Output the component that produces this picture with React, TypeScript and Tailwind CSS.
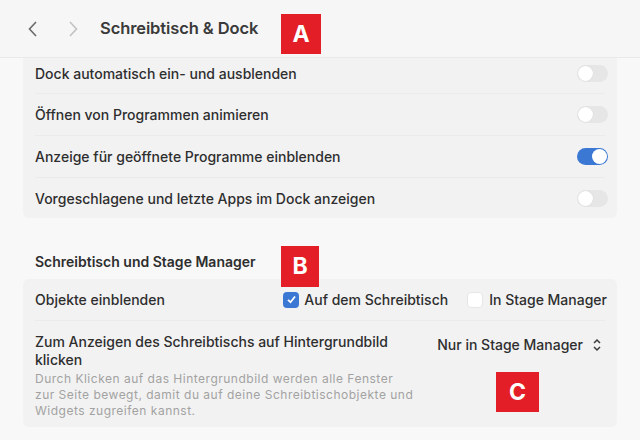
import React from "react";

function Toggle({ on }: { on?: boolean }) {
  return on ? (
    <div className="w-[31px] h-[17px] rounded-full bg-[#3a78d4] relative">
      <div className="absolute right-[1px] top-[1px] w-[15px] h-[15px] rounded-full bg-white" />
    </div>
  ) : (
    <div className="w-[31px] h-[17px] rounded-full bg-[#e6e6e6] relative">
      <div className="absolute left-[1px] top-[1px] w-[15px] h-[15px] rounded-full bg-white shadow-[0_0_1px_rgba(0,0,0,0.15)]" />
    </div>
  );
}

function Row({ label, on, h }: { label: string; on?: boolean; h: string }) {
  return (
    <div className={`flex items-center justify-between pl-3 pr-[9px] ${h}`}>
      <span>{label}</span>
      <Toggle on={on} />
    </div>
  );
}

export default function App() {
  return (
    <div
      className="w-[640px] h-[440px] bg-[#f8f8f8] text-[#2e2e2e] relative overflow-hidden"
      style={{ fontFamily: "Inter, 'Liberation Sans', sans-serif" }}
    >
      <div className="h-[58px] flex items-center bg-[#f6f6f6] border-b border-[#e9e9e9] relative z-10">
        <svg width="12" height="16" viewBox="0 0 12 16" className="ml-[27px]">
          <path d="M9 1 L2.5 8 L9 15" fill="none" stroke="#6a6a6a" strokeWidth="1.6" />
        </svg>
        <svg width="12" height="16" viewBox="0 0 12 16" className="ml-[28px]">
          <path d="M3 1 L9.5 8 L3 15" fill="none" stroke="#c2c2c2" strokeWidth="1.6" />
        </svg>
        <span className="ml-[21px] text-[16.5px] font-semibold text-[#3a3a3a] tracking-[-0.1px]">
          Schreibtisch &amp; Dock
        </span>
      </div>

      <div className="mx-[23px] bg-[#f2f2f2] rounded-b-[6px] text-[14px] font-medium">
        <Row label="Dock automatisch ein- und ausblenden" h="h-[35px] pb-[4px]" />
        <div className="mx-3 h-px bg-[#ebebeb]" />
        <Row label="Öffnen von Programmen animieren" h="h-[41px]" />
        <div className="mx-3 h-px bg-[#ebebeb]" />
        <Row label="Anzeige für geöffnete Programme einblenden" on h="h-[41px]" />
        <div className="mx-3 h-px bg-[#ebebeb]" />
        <Row label="Vorgeschlagene und letzte Apps im Dock anzeigen" h="h-[40px]" />
      </div>

      <div className="mx-[23px] px-3 mt-[33px] h-[28px] flex items-start text-[14px] font-semibold">
        Schreibtisch und Stage Manager
      </div>

      <div className="mx-[23px] bg-[#f2f2f2] rounded-[6px] text-[14px] font-medium">
        <div className="flex items-center pl-3 pr-[10px] h-[41px]">
          <span className="flex-1">Objekte einblenden</span>
          <div className="w-[16px] h-[16px] rounded-[4px] bg-[#3a78d4] flex items-center justify-center">
            <svg width="11" height="11" viewBox="0 0 11 11">
              <path d="M2 5.8 L4.5 8.2 L9 2.5" fill="none" stroke="white" strokeWidth="1.8" />
            </svg>
          </div>
          <span className="ml-[5px]">Auf dem Schreibtisch</span>
          <div className="ml-[19px] w-[16px] h-[16px] rounded-[4px] bg-white border border-[#e6e6e6]" />
          <span className="ml-[6px]">In Stage Manager</span>
        </div>
        <div className="mx-3 h-px bg-[#ebebeb]" />
        <div className="pl-3 pr-[15px] pt-[12px] pb-[8px]">
          <div className="flex items-start">
            <div className="flex-1 leading-[18px]">
              Zum Anzeigen des Schreibtischs auf Hintergrundbild
              <br />
              klicken
            </div>
            <div className="flex items-center mt-[1px]">
              <span>Nur in Stage Manager</span>
              <svg width="10" height="14" viewBox="0 0 10 14" className="ml-[9px]">
                <path d="M2 5 L5 2 L8 5 M2 9 L5 12 L8 9" fill="none" stroke="#3a3a3a" strokeWidth="1.5" />
              </svg>
            </div>
          </div>
          <div className="text-[12px] font-normal tracking-[0.5px] leading-[16px] text-[#a2a2a2] mt-[2px] whitespace-nowrap">
            Durch Klicken auf das Hintergrundbild werden alle Fenster
            <br />
            zur Seite bewegt, damit du auf deine Schreibtischobjekte und
            <br />
            Widgets zugreifen kannst.
          </div>
        </div>
      </div>

      <div className="absolute left-[281px] top-[14px] w-[40px] h-[40px] bg-[#e41e26] text-white text-[23px] font-bold flex items-center justify-center z-20">
        A
      </div>
      <div className="absolute left-[281px] top-[246px] w-[38px] h-[41px] bg-[#e41e26] text-white text-[23px] font-bold flex items-center justify-center">
        B
      </div>
      <div className="absolute left-[496px] top-[372px] w-[43px] h-[40px] bg-[#e41e26] text-white text-[23px] font-bold flex items-center justify-center">
        C
      </div>
    </div>
  );
}
